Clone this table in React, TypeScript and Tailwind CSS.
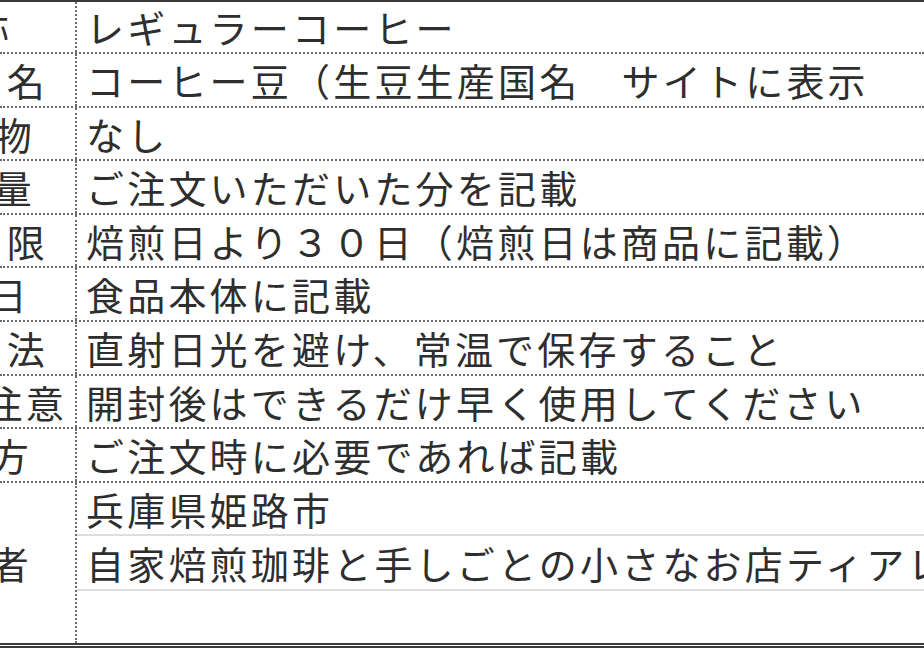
const rows = [
  { label: "名　称", pad: "pr-[63px]", h: "h-[52px]", value: "レギュラーコーヒー" },
  { label: "原材料　名", pad: "pr-[27px]", h: "h-[54px]", value: "コーヒー豆（生豆生産国名　サイトに表示" },
  { label: "添加物", pad: "pr-[40px]", h: "h-[53px]", value: "なし" },
  { label: "内容量", pad: "pr-[40px]", h: "h-[54px]", value: "ご注文いただいた分を記載" },
  { label: "賞味期　限", pad: "pr-[27px]", h: "h-[53px]", value: "焙煎日より３０日（焙煎日は商品に記載）" },
  { label: "製造　日", pad: "pr-[45px]", h: "h-[54px]", value: "食品本体に記載" },
  { label: "保存方　法", pad: "pr-[27px]", h: "h-[54px]", value: "直射日光を避け、常温で保存すること" },
  { label: "使用上の注意", pad: "pr-[8px]", h: "h-[53px]", value: "開封後はできるだけ早く使用してください" },
  { label: "挽き方", pad: "pr-[43px]", h: "h-[54px]", value: "ご注文時に必要であれば記載" },
];

export default function App() {
  return (
    <div className="w-[924px] h-[660px] overflow-hidden bg-white text-[#2e2e2e] text-[38px] leading-none tracking-[3.2px] [font-family:'Noto_Sans_CJK_JP','Noto_Sans_CJK_SC',sans-serif]">
      <div className="flex flex-col border-t-2 border-b-[5px] border-double border-[#3a3a3a]">
        {rows.map((r) => (
          <div key={r.label} className={`flex ${r.h} border-b-2 border-dotted border-[#6b6b6b]`}>
            <div className={`flex w-[77px] shrink-0 items-center justify-end overflow-hidden whitespace-nowrap border-r-2 border-dotted border-[#6b6b6b] ${r.pad}`}>
              {r.label}
            </div>
            <div className="flex flex-1 items-center overflow-hidden whitespace-nowrap pl-[9px]">
              {r.value}
            </div>
          </div>
        ))}

        {/* 製造者: 3段のセル */}
        <div className="flex h-[160px]">
          <div className="flex w-[77px] shrink-0 items-center justify-end overflow-hidden whitespace-nowrap border-r-2 border-dotted border-[#6b6b6b] pr-[43px]">
            製造者
          </div>
          <div className="flex flex-1 flex-col overflow-hidden whitespace-nowrap">
            <div className="flex h-[53px] items-center border-b-2 border-[#dedede] pl-[9px]">
              兵庫県姫路市
            </div>
            <div className="flex h-[55px] items-center border-b-2 border-[#dedede] pl-[9px]">
              自家焙煎珈琲と手しごとの小さなお店ティアレ
            </div>
            <div className="flex-1" />
          </div>
        </div>
      </div>
    </div>
  );
}
